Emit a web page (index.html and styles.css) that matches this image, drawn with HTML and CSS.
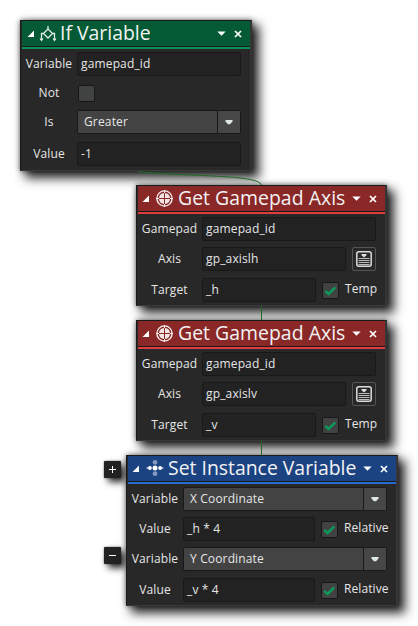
FILE: index.html
```html
<!DOCTYPE html>
<html lang="en">
<head>
<meta charset="utf-8">
<title>Action blocks</title>
<link rel="stylesheet" href="styles.css">
</head>
<body>
<svg class="defs" width="0" height="0">
  <symbol id="fold" viewBox="0 0 8 8"><path d="M7 .5V7H.5z" fill="#fff"/></symbol>
  <symbol id="down" viewBox="0 0 9 5"><path d="M.3.4h8.4L4.5 4.8z" fill="#fff"/></symbol>
  <symbol id="close" viewBox="0 0 8 8"><path d="M1 1l6 6M7 1L1 7" stroke="#fff" stroke-width="1.7"/></symbol>
  <symbol id="drop" viewBox="0 0 8 5"><path d="M.5 0h7v1.6L5 4.3H3L.5 1.6z" fill="#dfe9e6"/></symbol>
  <symbol id="tick" viewBox="0 0 17 17"><path d="M3.3 8.8l3.3 3.1 6.7-6.5" fill="none" stroke="#0a9a5c" stroke-width="2.5"/></symbol>
  <symbol id="branch" viewBox="0 0 18 18"><path d="M9 1v3M9 4l4.5 4.5L9 13 4.500 8.500zM5 8.500H2.500V15M13 8.500h2.500V15" fill="none" stroke="#e4eee9" stroke-width="1.300"/><path d="M.5 13.500h4l-2 3zM13.500 13.500h4l-2 3z" fill="#e4eee9"/></symbol>
  <symbol id="target" viewBox="0 0 17 17"><circle cx="8.500" cy="8.500" r="7.600" fill="none" stroke="#f8eeee" stroke-width="1.400"/><g fill="#f4e4e4"><path d="M8 8H3A5.500 5.500 0 0 1 8 3zM9 8V3A5.500 5.500 0 0 1 14 8zM8 9v5A5.500 5.500 0 0 1 3 9zM9 9h5A5.500 5.500 0 0 1 9 14z"/></g><path d="M8.500 0v3M8.500 14v3M0 8.500h3M14 8.500h3" stroke="#f8eeee" stroke-width="1"/></symbol>
  <symbol id="dots" viewBox="0 0 18 18"><g fill="#8298bd"><circle cx="9" cy="3.300" r="2.400"/><circle cx="9" cy="14.700" r="2.400"/></g><g fill="#fff"><circle cx="9" cy="9" r="2.500"/><circle cx="3.900" cy="9" r="1.900"/><circle cx="14.100" cy="9" r="1.900"/><circle cx="1.300" cy="9" r=".8"/><circle cx="16.700" cy="9" r=".8"/></g></symbol>
  <symbol id="list" viewBox="0 0 16 16"><rect x=".8" y=".8" width="14.400" height="14.400" rx="2" fill="#292929" stroke="#ddd" stroke-width="1.500"/><path d="M5.500 3h5v1.300L8 6.500 5.500 4.300z" fill="#ddd"/><path d="M2.500 7.500h11M2.500 9.500h11M2.500 11.500h11M2.500 13.500h11" stroke="#bbb" stroke-width="1"/></symbol>
</svg>

<main class="canvas">
  <section class="node node-if green">
    <header><svg class="fold"><use href="#fold"/></svg><svg class="kind"><use href="#branch"/></svg><h2>If Variable</h2><svg class="down"><use href="#down"/></svg><svg class="close"><use href="#close"/></svg></header>
    <div class="rows">
      <div class="row"><label>Variable</label><div class="input">gamepad_id</div></div>
      <div class="row"><label>Not</label><div class="check"></div></div>
      <div class="row"><label>Is</label><div class="select"><span>Greater</span><i><svg><use href="#drop"/></svg></i></div></div>
      <div class="row"><label>Value</label><div class="input">-1</div></div>
    </div>
  </section>

  <section class="node node-axis-h red">
    <header><svg class="fold"><use href="#fold"/></svg><svg class="kind"><use href="#target"/></svg><h2>Get Gamepad Axis</h2><svg class="down"><use href="#down"/></svg><svg class="close"><use href="#close"/></svg></header>
    <div class="rows">
      <div class="row"><label>Gamepad</label><div class="input">gamepad_id</div></div>
      <div class="row"><label>Axis</label><div class="input">gp_axislh</div><div class="pick"><svg><use href="#list"/></svg></div></div>
      <div class="row"><label>Target</label><div class="input">_h</div><div class="check"><svg><use href="#tick"/></svg></div><span class="flag">Temp</span></div>
    </div>
  </section>

  <section class="node node-axis-v red">
    <header><svg class="fold"><use href="#fold"/></svg><svg class="kind"><use href="#target"/></svg><h2>Get Gamepad Axis</h2><svg class="down"><use href="#down"/></svg><svg class="close"><use href="#close"/></svg></header>
    <div class="rows">
      <div class="row"><label>Gamepad</label><div class="input">gamepad_id</div></div>
      <div class="row"><label>Axis</label><div class="input">gp_axislv</div><div class="pick"><svg><use href="#list"/></svg></div></div>
      <div class="row"><label>Target</label><div class="input">_v</div><div class="check"><svg><use href="#tick"/></svg></div><span class="flag">Temp</span></div>
    </div>
  </section>

  <div class="step step-add"><svg viewBox="0 0 17 17"><path d="M5 8.500h7M8.500 5v7" stroke="#fff" stroke-width="1"/></svg></div>
  <div class="step step-remove"><svg viewBox="0 0 17 17"><path d="M5 8.500h7" stroke="#fff" stroke-width="1"/></svg></div>

  <section class="node node-set blue">
    <header><svg class="fold"><use href="#fold"/></svg><svg class="kind"><use href="#dots"/></svg><h2>Set Instance Variable</h2><svg class="down"><use href="#down"/></svg><svg class="close"><use href="#close"/></svg></header>
    <div class="rows">
      <div class="row"><label>Variable</label><div class="select"><span>X Coordinate</span><i><svg><use href="#drop"/></svg></i></div></div>
      <div class="row"><label>Value</label><div class="input">_h * 4</div><div class="check"><svg><use href="#tick"/></svg></div><span class="flag">Relative</span></div>
      <div class="row"><label>Variable</label><div class="select"><span>Y Coordinate</span><i><svg><use href="#drop"/></svg></i></div></div>
      <div class="row"><label>Value</label><div class="input">_v * 4</div><div class="check"><svg><use href="#tick"/></svg></div><span class="flag">Relative</span></div>
    </div>
  </section>

  <svg class="wires" viewBox="0 0 418 626"><path d="M138 171.500C185 177 258 174 261.500 185M261.500 306v14M261.500 441v14" fill="none" stroke="#1c6b25" stroke-width="1"/></svg>
</main>
</body>
</html>
```
FILE: styles.css
```css
* { box-sizing: border-box; }
body { margin: 0; background: #fff; overflow: hidden; font: 12px/22px "Open Sans", "Noto Sans", sans-serif; color: #e6e6e6; }
svg { display: block; flex: none; }
.defs { position: absolute; }
.canvas { position: relative; width: 418px; height: 626px; overflow: hidden; }
.wires { position: absolute; left: 0; top: 0; width: 418px; height: 626px; }

.node {
  position: absolute;
  background: #282828;
  border: 1px solid #1a1a1a;
  border-right: 2px solid #353535;
  border-bottom-color: #3a3a3a;
  box-shadow: 6px 6px 10px 1px rgba(0, 0, 0, .85), 0 0 5px rgba(0, 0, 0, .55);
}
.node-if { left: 20px; top: 20px; width: 232px; height: 151px; --label: 56px; --end: 9px; }
.node-axis-h { left: 136px; top: 185px; width: 251px; height: 121px; --label: 65px; --end: 9px; }
.node-axis-v { left: 136px; top: 320px; width: 251px; height: 121px; --label: 65px; --end: 9px; }
.node-set { left: 126px; top: 455px; width: 272px; height: 151px; --label: 56px; --end: 9px; }

.green { --head: #035a34; --line: #079259; }
.red { --head: #8a2828; --line: #df3d3d; }
.blue { --head: #1b4382; --line: #2a6bd0; }

header { display: flex; align-items: center; height: 28px; padding: 0 8px 3px 5px; background: linear-gradient(var(--head) 25px, #1a1a1a 25px 26px, var(--line) 26px); margin-left: 1px; }
h2 { margin: -2px auto 0 3px; font-size: 19.4px; font-weight: 400; line-height: 25px; color: #f2f2f2; white-space: nowrap; }
.fold { width: 8px; height: 8px; margin-right: 4px; }
.kind { width: 18px; height: 18px; }
.red .kind { width: 17px; height: 17px; }
.red .fold, .blue .fold { margin-left: -1px; margin-right: 6px; }
.red h2 { margin-left: 5px; letter-spacing: .04px; }
.blue h2 { margin-left: 4px; }
.blue .kind { margin-top: -1px; }
.down { width: 9px; height: 5px; margin-right: 8px; }
.close { width: 8px; height: 8px; }

.rows { display: grid; padding-top: 3px; }
.node-if .rows { grid-template-rows: 29px 29px 32px 24px; }
.node-axis-h .rows, .node-axis-v .rows { grid-template-rows: 30px 31px 24px; }
.node-set .rows { grid-template-rows: 30px 30px 31px 24px; }
.row { display: flex; align-items: center; height: 24px; padding-right: var(--end); }
label { width: var(--label); flex: none; text-align: center; letter-spacing: .1px; }

.input, .select { flex: 1; height: 24px; border: 1px solid #191919; border-radius: 2px; white-space: pre; letter-spacing: .15px; }
.input { background: #222; padding-left: 3px; }
.select { display: flex; background: #434343; padding-left: 6px; }
.select span { flex: 1; }
.select i { width: 23px; border-left: 1px solid #191919; display: grid; place-items: center; background: #474747; }
.select svg { width: 8px; height: 5px; }
.check { width: 17px; height: 17px; border: 1px solid #171717; border-radius: 2px; background: #414343; margin-left: 1px; flex: none; }
.check svg { width: 17px; height: 17px; margin: -1px; }
.input + .check { margin-left: 6px; }
.flag { margin: -2px 0 0 6px; white-space: nowrap; flex: none; width: 31px; letter-spacing: .1px; }
.node-set .flag { width: 43px; }
.pick { width: 24px; height: 24px; margin-left: 6px; border: 1px solid #555; border-radius: 2px; display: grid; place-items: center; }
.pick svg { width: 16px; height: 16px; }

.step { position: absolute; left: 104px; width: 17px; height: 17px; border-radius: 1px; background: #222; box-shadow: 4px 4px 7px rgba(0, 0, 0, .85), 0 0 2px rgba(0, 0, 0, .5); }
.step-add { top: 461px; }
.step-remove { top: 547px; }
```
